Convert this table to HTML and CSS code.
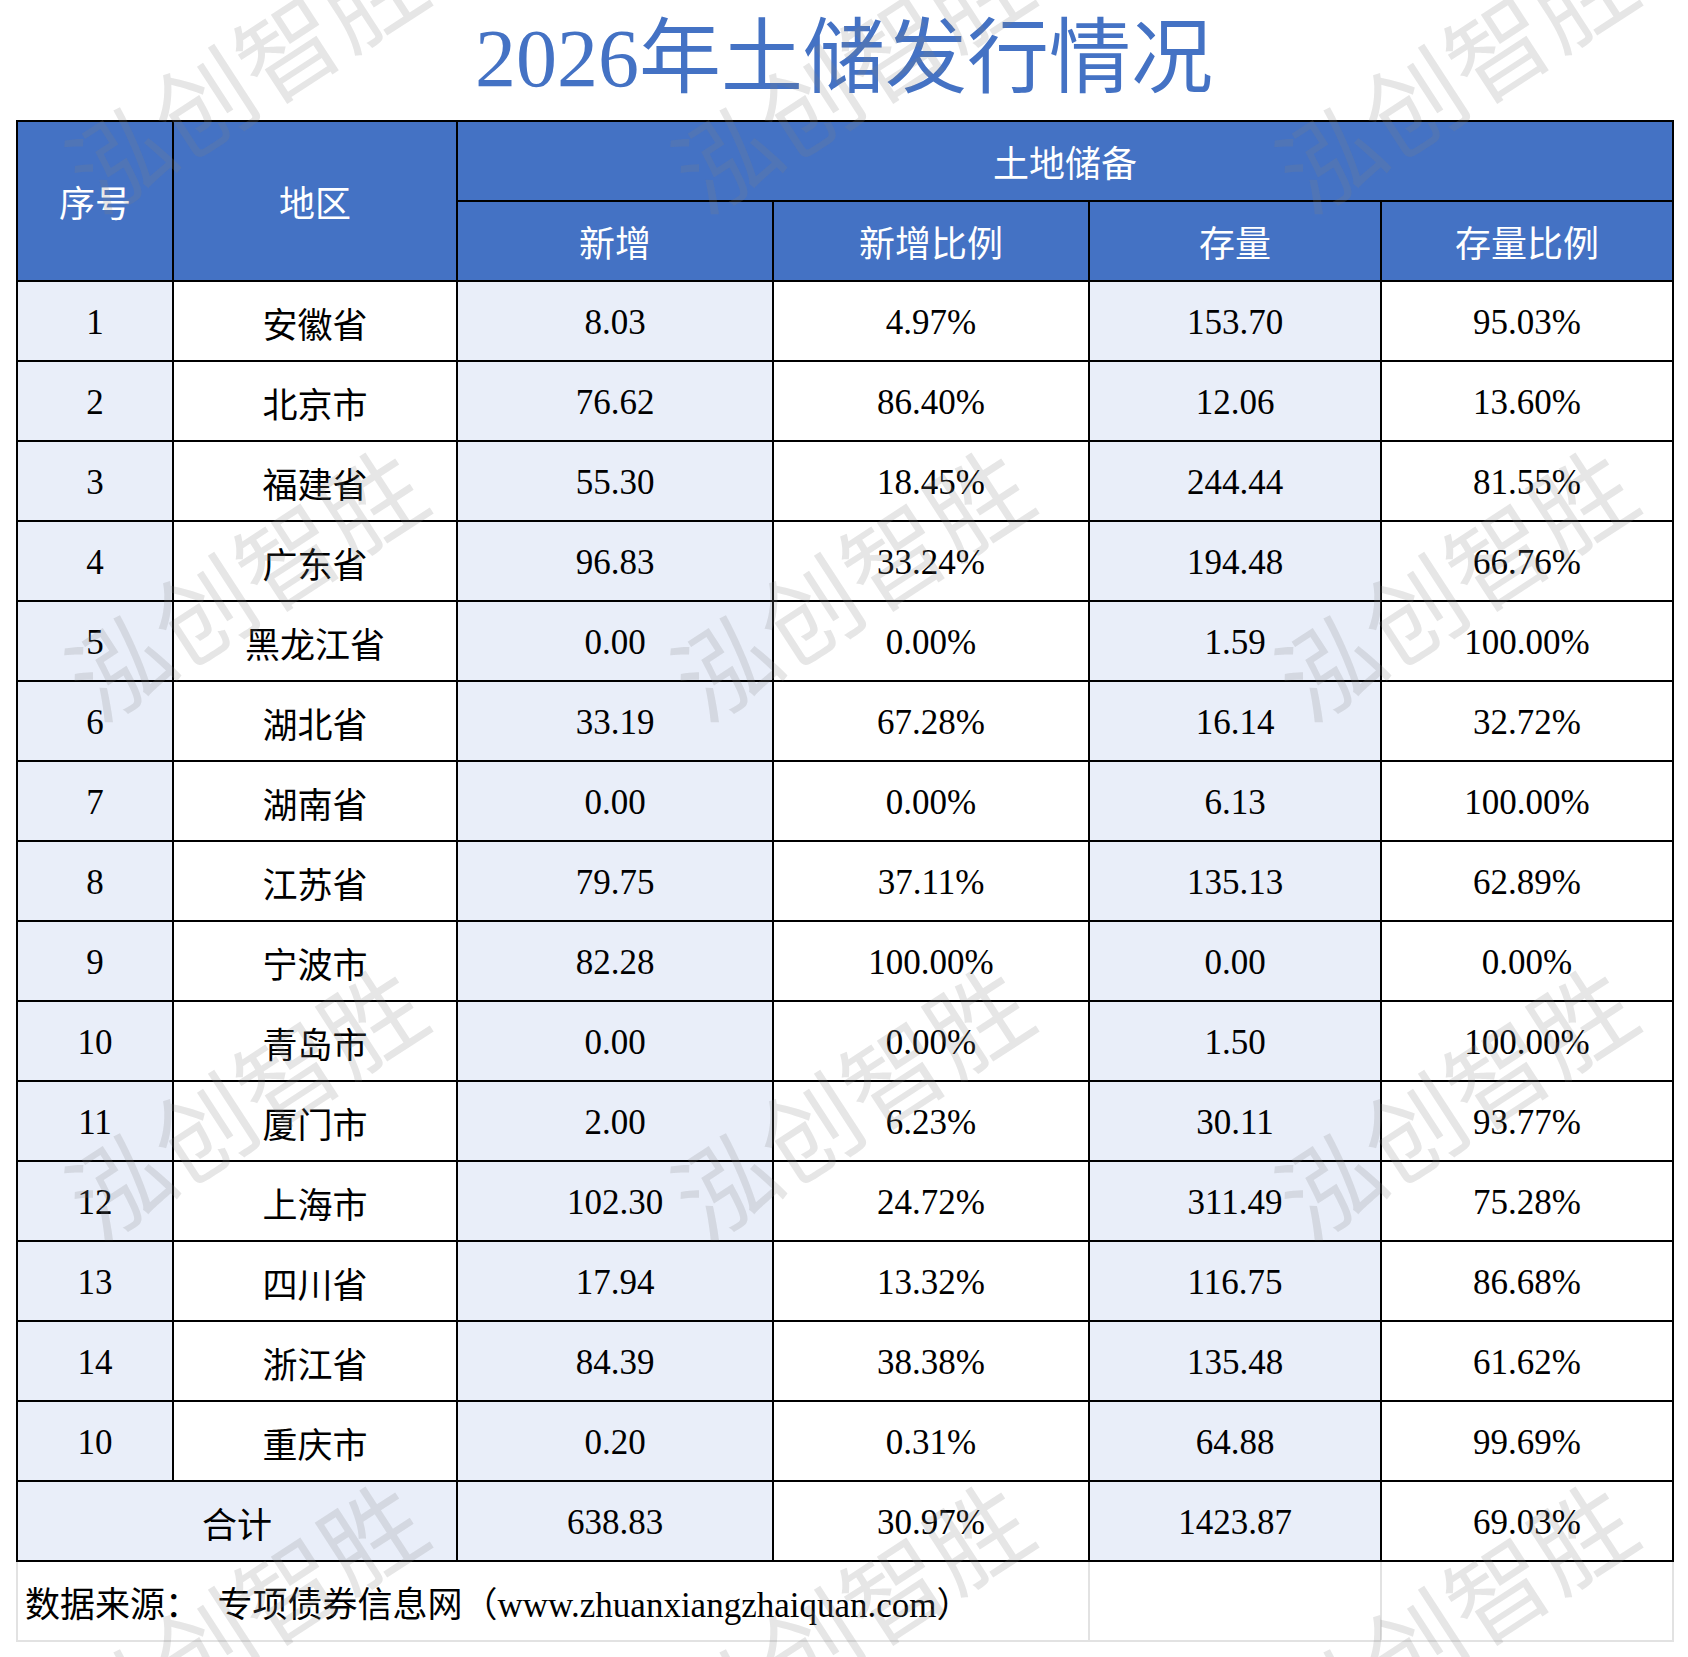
FILE: index.html
```html
<!DOCTYPE html>
<html lang="zh-CN">
<head>
<meta charset="utf-8">
<title>2026年土储发行情况</title>
<link rel="stylesheet" href="styles.css">
</head>
<body>
<div class="page">
  <h1 class="title">2026年土储发行情况</h1>
  <table class="sheet">
    <colgroup>
      <col class="c1"><col class="c2"><col class="c3"><col class="c4"><col class="c5"><col class="c6">
    </colgroup>
    <thead>
      <tr>
        <th rowspan="2">序号</th>
        <th rowspan="2">地区</th>
        <th colspan="4">土地储备</th>
      </tr>
      <tr>
        <th>新增</th>
        <th>新增比例</th>
        <th>存量</th>
        <th>存量比例</th>
      </tr>
    </thead>
    <tbody>
      <tr><td class="lt">1</td><td>安徽省</td><td class="lt">8.03</td><td>4.97%</td><td class="lt">153.70</td><td>95.03%</td></tr>
      <tr><td class="lt">2</td><td>北京市</td><td class="lt">76.62</td><td>86.40%</td><td class="lt">12.06</td><td>13.60%</td></tr>
      <tr><td class="lt">3</td><td>福建省</td><td class="lt">55.30</td><td>18.45%</td><td class="lt">244.44</td><td>81.55%</td></tr>
      <tr><td class="lt">4</td><td>广东省</td><td class="lt">96.83</td><td>33.24%</td><td class="lt">194.48</td><td>66.76%</td></tr>
      <tr><td class="lt">5</td><td>黑龙江省</td><td class="lt">0.00</td><td>0.00%</td><td class="lt">1.59</td><td>100.00%</td></tr>
      <tr><td class="lt">6</td><td>湖北省</td><td class="lt">33.19</td><td>67.28%</td><td class="lt">16.14</td><td>32.72%</td></tr>
      <tr><td class="lt">7</td><td>湖南省</td><td class="lt">0.00</td><td>0.00%</td><td class="lt">6.13</td><td>100.00%</td></tr>
      <tr><td class="lt">8</td><td>江苏省</td><td class="lt">79.75</td><td>37.11%</td><td class="lt">135.13</td><td>62.89%</td></tr>
      <tr><td class="lt">9</td><td>宁波市</td><td class="lt">82.28</td><td>100.00%</td><td class="lt">0.00</td><td>0.00%</td></tr>
      <tr><td class="lt">10</td><td>青岛市</td><td class="lt">0.00</td><td>0.00%</td><td class="lt">1.50</td><td>100.00%</td></tr>
      <tr><td class="lt">11</td><td>厦门市</td><td class="lt">2.00</td><td>6.23%</td><td class="lt">30.11</td><td>93.77%</td></tr>
      <tr><td class="lt">12</td><td>上海市</td><td class="lt">102.30</td><td>24.72%</td><td class="lt">311.49</td><td>75.28%</td></tr>
      <tr><td class="lt">13</td><td>四川省</td><td class="lt">17.94</td><td>13.32%</td><td class="lt">116.75</td><td>86.68%</td></tr>
      <tr><td class="lt">14</td><td>浙江省</td><td class="lt">84.39</td><td>38.38%</td><td class="lt">135.48</td><td>61.62%</td></tr>
      <tr><td class="lt">10</td><td>重庆市</td><td class="lt">0.20</td><td>0.31%</td><td class="lt">64.88</td><td>99.69%</td></tr>
      <tr><td class="lt" colspan="2">合计</td><td class="lt">638.83</td><td>30.97%</td><td class="lt">1423.87</td><td>69.03%</td></tr>
    </tbody>
  </table>
  <table class="foot">
    <colgroup>
      <col class="f1"><col class="c5"><col class="c6">
    </colgroup>
    <tr><td class="src">数据来源：&nbsp; 专项债券信息网（www.zhuanxiangzhaiquan.com）</td><td></td><td></td></tr>
  </table>

  <div class="marks" aria-hidden="true">
    <span class="wm" style="left:243px;top:72px">泓创智胜</span>
    <span class="wm" style="left:849px;top:72px">泓创智胜</span>
    <span class="wm" style="left:1453px;top:72px">泓创智胜</span>
    <span class="wm" style="left:243px;top:580px">泓创智胜</span>
    <span class="wm" style="left:849px;top:580px">泓创智胜</span>
    <span class="wm" style="left:1453px;top:580px">泓创智胜</span>
    <span class="wm" style="left:243px;top:1098px">泓创智胜</span>
    <span class="wm" style="left:849px;top:1098px">泓创智胜</span>
    <span class="wm" style="left:1453px;top:1098px">泓创智胜</span>
    <span class="wm" style="left:243px;top:1614px">泓创智胜</span>
    <span class="wm" style="left:849px;top:1614px">泓创智胜</span>
    <span class="wm" style="left:1453px;top:1614px">泓创智胜</span>
  </div>
</div>
</body>
</html>
```
FILE: styles.css
```css
* { box-sizing: border-box; }

html, body {
  margin: 0;
  padding: 0;
  background: #ffffff;
}

.page {
  position: relative;
  width: 1688px;
  height: 1657px;
  overflow: hidden;
  padding: 0 16px;
  font-family: "Liberation Serif", "Noto Sans CJK SC", serif;
  color: #000;
}

.title {
  margin: 0;
  height: 120px;
  padding-bottom: 20px;
  display: flex;
  align-items: center;
  justify-content: center;
  font-size: 82px;
  font-weight: 400;
  color: #4472c4;
  white-space: nowrap;
}

.sheet,
.foot {
  width: 1656px;
  border-collapse: collapse;
  table-layout: fixed;
}

.c1 { width: 156px; }
.c2 { width: 284px; }
.c3 { width: 316px; }
.c4 { width: 316px; }
.c5 { width: 292px; }
.c6 { width: 292px; }
.f1 { width: 1072px; }

.sheet th,
.sheet td {
  border: 2px solid #000;
  text-align: center;
  vertical-align: middle;
  padding: 0;
  white-space: nowrap;
}

.sheet tr {
  height: 80px;
}

.sheet th {
  background: #4472c4;
  color: #ffffff;
  font-size: 36px;
  font-weight: 400;
}

.sheet td {
  background: #ffffff;
  font-size: 35px;
  padding-top: 3px;
}

.sheet td.lt {
  background: #e9eef9;
}

.foot tr {
  height: 79px;
}

.foot td {
  border: 2px solid #e2e2e2;
  border-top: none;
  padding: 0;
}

.foot td.src {
  padding-left: 7px;
  font-size: 35px;
  white-space: nowrap;
  vertical-align: middle;
}

.marks {
  position: absolute;
  inset: 0;
  pointer-events: none;
}

.wm {
  position: absolute;
  transform: translate(-50%, -50%) rotate(-33deg);
  font-family: "Noto Sans CJK SC", sans-serif;
  font-size: 100px;
  font-weight: 400;
  letter-spacing: 0;
  line-height: 1;
  color: rgba(128, 128, 128, 0.2);
  white-space: nowrap;
}
```
